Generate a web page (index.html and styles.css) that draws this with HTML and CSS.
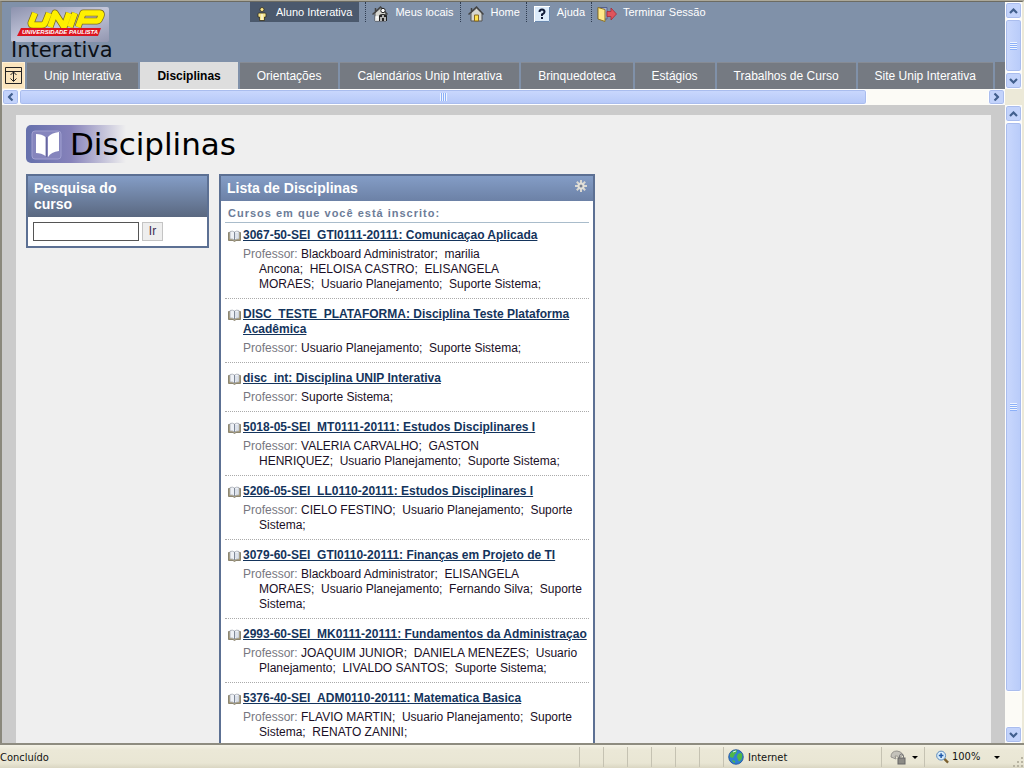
FILE: index.html
```html
<!DOCTYPE html>
<html lang="pt-BR">
<head>
<meta charset="utf-8">
<title>Unip Interativa - Disciplinas</title>
<link rel="stylesheet" href="styles.css">
</head>
<body>
<svg class="defs" aria-hidden="true">
  <defs>
    <symbol id="up" viewBox="0 0 9 6"><path d="M1 5 4.5 1.5 8 5" fill="none" stroke="#42608e" stroke-width="2.2"/></symbol>
    <symbol id="house" viewBox="0 0 16 16">
      <path d="M3 7v8h11V7L8.500 2z" fill="#d6d6d0" stroke="#555"/>
      <path d="M0.500 8.500 8.500 1l7 7.500M3.500 5V2" fill="none" stroke="#444" stroke-width="1.500"/>
    </symbol>
    <symbol id="book" viewBox="0 0 13 12">
      <path d="M0.500 2.500h12v8H8l-1.500 1L5 10.500H.500z" fill="#a89a70" stroke="#8c8672"/>
      <path d="M2 1.500Q4.500.500 6.500 2 8.500.500 11 1.500v7.500Q8.500 8.500 6.500 10 4.500 8.500 2 9z" fill="#eef1f6" stroke="#a4a9b2" stroke-width=".8"/>
      <path d="M6.500 2v8" stroke="#7e8796"/>
      <path d="M8 3v5M10 3v5" stroke="#cbd3e0"/>
    </symbol>
  </defs>
</svg>
<div class="browser">
  <div class="frame top-frame">
    <div class="banner">
      <div class="banner-top">
        <div class="brand">
          <svg class="logo" viewBox="0 0 98 36" role="img" aria-label="UNIP Universidade Paulista">
            <defs><linearGradient id="plate" x2="1" y2="1"><stop stop-color="#8d92ae"/><stop offset=".5" stop-color="#c3c6da"/><stop offset="1" stop-color="#9296b0"/></linearGradient></defs>
            <rect width="98" height="35" rx="2" fill="url(#plate)"/>
            <g fill="none" stroke-linejoin="round">
              <path d="M24 6l-4 10q0 2 2 2h9q2 0 3-2L38 6M39 20l5-14 9 14 5-14M64 6l-5 14M67 20l5-14h17q2 0 1 3l-1 2q-1 3-3 3H71" stroke="#7c6a20" stroke-width="7"/>
              <path d="M24 6l-4 10q0 2 2 2h9q2 0 3-2L38 6M39 20l5-14 9 14 5-14M64 6l-5 14M67 20l5-14h17q2 0 1 3l-1 2q-1 3-3 3H71" stroke="#fff000" stroke-width="5.500"/>
            </g>
            <path d="M10 21h80l-3 8H6z" fill="#dc1420"/>
            <text x="11" y="27" class="logo-sub">UNIVERSIDADE PAULISTA</text>
          </svg>
          <span class="brand-name">Interativa</span>
        </div>
        <nav class="tools">
          <span class="user">
            <svg class="ico" viewBox="0 0 16 16"><circle cx="8" cy="3.500" r="2" fill="#ffe98c" stroke="#332f20" stroke-width=".8"/><path d="M5 7h6q1 0 1 1v3h-1.500v3.500h-5V11H4V8q0-1 1-1z" fill="#f4e48c" stroke="#332f20" stroke-width=".8"/><path d="M8 8v6" stroke="#fff"/></svg>
            Aluno Interativa</span>
          <a href="#" class="locais"><svg class="ico" viewBox="0 0 16 16"><use href="#house"/><circle cx="11" cy="4.500" r="2.200" fill="#fff" stroke="#222"/><path d="M7 15V10q0-2 4-2t4 2v5z" fill="#222"/><path d="M9 15v-4M11 12v-3M13 15v-4M4 15v-4h2v4" stroke="#fff" stroke-width="1.300" fill="none"/></svg>Meus locais</a>
          <a href="#"><svg class="ico" viewBox="0 0 16 16"><use href="#house"/><path d="M6.500 15V9h4v6z" fill="#ffe34d" stroke="#8a6a22"/></svg>Home</a>
          <a href="#"><svg class="ico" viewBox="0 0 16 16"><rect x=".5" y=".5" width="15" height="15" fill="#dcebfa" stroke="#fff"/><path d="M1 15.500h14.500V1" fill="none" stroke="#6c8ab0"/><path d="M5.500 6q0-2.500 2.500-2.500T10.500 6q0 1.200-2.500 2.500v1.500M8 11v2" fill="none" stroke="#111c38" stroke-width="2"/></svg>Ajuda</a>
          <a href="#" class="exit"><svg class="ico wide" viewBox="0 0 20 16"><path d="M1 1.500h9V13H1z" fill="#aab4d8" stroke="#55608c"/><path d="M1 1.500l7 2V15.500L1 13z" fill="#ffe98a" stroke="#8f7426"/><path d="M10 5.500h4V2l5.500 6-5.500 6v-3.500h-4z" fill="#e0545c" stroke="#a62c3a" stroke-width=".8"/></svg>Terminar Sessão</a>
        </nav>
      </div>
      <nav class="tabs">
        <button class="toggle" aria-label="Ocultar cabeçalho"><svg viewBox="0 0 17 17"><path d="M.500.500h16v16H.500zM.500 4.500h16M8.500 5v9M5.500 8l3-3 3 3M5.500 11.500l3 3 3-3" fill="none" stroke="#222"/></svg></button>
        <a href="#">Unip Interativa</a>
        <a href="#" class="active">Disciplinas</a>
        <a href="#">Orientações</a>
        <a href="#">Calendários Unip Interativa</a>
        <a href="#">Brinquedoteca</a>
        <a href="#">Estágios</a>
        <a href="#">Trabalhos de Curso</a>
        <a href="#">Site Unip Interativa</a>
        <span class="tab-rest"></span>
      </nav>
    </div>
    <div class="vbar">
      <button aria-label="Subir"><svg><use href="#up"/></svg></button>
      <div class="thumb"><i class="grip"></i></div>
      <button aria-label="Descer"><svg class="down"><use href="#up"/></svg></button>
    </div>
    <div class="hbar">
      <button aria-label="Esquerda"><svg class="left"><use href="#up"/></svg></button>
      <div class="thumb"><i class="grip"></i></div>
      <div class="track"></div>
      <button aria-label="Direita"><svg class="right"><use href="#up"/></svg></button>
    </div>
    <div class="corner"></div>
  </div>

  <div class="frame main-frame">
    <main class="page">
      <h1 class="title">
        <svg viewBox="0 0 38 37"><rect x="6" y="5" width="29" height="28" rx="3" fill="#8585bd" stroke="#a09fd0"/><path d="M10 8q6 0 9.500 3v19q-4-3-9.500-3zM33 6q-8 1-11 5v20q3-5 11-6z" fill="#fff"/><path d="M20.500 11v20" stroke="#66669c"/></svg>
        <span>Disciplinas</span>
      </h1>
      <div class="columns">
        <section class="panel search">
          <h2><label for="q">Pesquisa do<br>curso</label></h2>
          <form class="search-form"><input id="q" type="text"><button type="button">Ir</button></form>
        </section>
        <section class="panel courses">
          <h2>Lista de Disciplinas
            <svg class="gear" viewBox="0 0 12 12"><path d="M6 0v12M0 6h12M1.800 1.800l8.400 8.400M10.200 1.800l-8.400 8.400" stroke="#d9d8d2" stroke-width="2"/><circle cx="6" cy="6" r="3.500" fill="#e2e1da"/><circle cx="6" cy="6" r="1.500" fill="#777f90"/></svg>
          </h2>
          <div class="courses-body">
            <h3>Cursos em que você está inscrito:</h3>
            <ul>
              <li><svg><use href="#book"/></svg><a href="#">3067-50-SEI_GTI0111-20111: Comunicaçao Aplicada</a>
                <p><span>Professor:</span> Blackboard Administrator;&nbsp; marilia<br>Ancona;&nbsp; HELOISA CASTRO;&nbsp; ELISANGELA<br>MORAES;&nbsp; Usuario Planejamento;&nbsp; Suporte Sistema;</p></li>
              <li><svg><use href="#book"/></svg><a href="#">DISC_TESTE_PLATAFORMA: Disciplina Teste Plataforma<br>Acadêmica</a>
                <p><span>Professor:</span> Usuario Planejamento;&nbsp; Suporte Sistema;</p></li>
              <li><svg><use href="#book"/></svg><a href="#">disc_int: Disciplina UNIP Interativa</a>
                <p><span>Professor:</span> Suporte Sistema;</p></li>
              <li><svg><use href="#book"/></svg><a href="#">5018-05-SEI_MT0111-20111: Estudos Disciplinares I</a>
                <p><span>Professor:</span> VALERIA CARVALHO;&nbsp; GASTON<br>HENRIQUEZ;&nbsp; Usuario Planejamento;&nbsp; Suporte Sistema;</p></li>
              <li><svg><use href="#book"/></svg><a href="#">5206-05-SEI_LL0110-20111: Estudos Disciplinares I</a>
                <p><span>Professor:</span> CIELO FESTINO;&nbsp; Usuario Planejamento;&nbsp; Suporte<br>Sistema;</p></li>
              <li><svg><use href="#book"/></svg><a href="#">3079-60-SEI_GTI0110-20111: Finanças em Projeto de TI</a>
                <p><span>Professor:</span> Blackboard Administrator;&nbsp; ELISANGELA<br>MORAES;&nbsp; Usuario Planejamento;&nbsp; Fernando Silva;&nbsp; Suporte<br>Sistema;</p></li>
              <li><svg><use href="#book"/></svg><a href="#">2993-60-SEI_MK0111-20111: Fundamentos da Administraçao</a>
                <p><span>Professor:</span> JOAQUIM JUNIOR;&nbsp; DANIELA MENEZES;&nbsp; Usuario<br>Planejamento;&nbsp; LIVALDO SANTOS;&nbsp; Suporte Sistema;</p></li>
              <li><svg><use href="#book"/></svg><a href="#">5376-40-SEI_ADM0110-20111: Matematica Basica</a>
                <p><span>Professor:</span> FLAVIO MARTIN;&nbsp; Usuario Planejamento;&nbsp; Suporte<br>Sistema;&nbsp; RENATO ZANINI;</p></li>
            </ul>
          </div>
        </section>
      </div>
    </main>
    <div class="vbar">
      <button aria-label="Subir"><svg><use href="#up"/></svg></button>
      <div class="thumb"><i class="grip"></i></div>
      <div class="track"></div>
      <button aria-label="Descer"><svg class="down"><use href="#up"/></svg></button>
    </div>
  </div>

  <footer class="status">
    <span class="status-text">Concluído</span>
    <i class="cell"></i><i class="cell"></i><i class="cell"></i><i class="cell"></i><i class="cell"></i><i class="cell"></i>
    <span class="zone"><svg viewBox="0 0 16 16"><circle cx="8" cy="8" r="7.300" fill="#2f7fd0" stroke="#1d4f94" stroke-width=".8"/><path d="M2 5q3-4 7-4 0 3-2 4L5 9 2 8zM10 5q3-2 4 0 1 4-2 7-2 1-2-2-2-2 0-5zM4 11l3 1v2q-3-1-3-3z" fill="#4fb848"/><path d="M5 3l3-1" stroke="#d9f2ff"/></svg>Internet</span>
    <button class="lock" aria-label="Modo protegido"><svg viewBox="0 0 16 16"><path d="M1 8q0-6 6-6 4 0 6 4L9 9Q8 6 5 7l1 3z" fill="#c4c2ba" stroke="#96948e"/><rect x="8" y="9" width="7" height="6" fill="#8c8b86" stroke="#666"/><path d="M9.500 9V7q0-2 2-2t2 2v2" fill="none" stroke="#777"/></svg><i class="caret"></i></button>
    <button class="zoom"><svg viewBox="0 0 14 14"><path d="M9 9l4 4" stroke="#7a6030" stroke-width="2.500"/><circle cx="5.500" cy="5.500" r="4.800" fill="#d8ecfa" stroke="#5484b8"/><path d="M5.500 3v5M3 5.500h5" stroke="#1e58a8" stroke-width="1.600"/></svg>100%<i class="caret"></i></button>
    <svg class="resize" viewBox="0 0 12 12"><path d="M9 1h2v2H9zM9 5h2v2H9zM9 9h2v2H9zM5 5h2v2H5zM5 9h2v2H5zM1 9h2v2H1z" fill="#b8b4a2"/></svg>
  </footer>
</div>
</body>
</html>
```

FILE: styles.css
```css
* { box-sizing: border-box; }
body { margin: 0; font-family: "Liberation Sans", Arial, sans-serif; font-size: 12px; line-height: 15px; color: #111; }
h1, h2, h3, p, ul { margin: 0; padding: 0; }
a { color: inherit; text-decoration: none; }
button { margin: 0; padding: 0; border: 0; background: none; font: inherit; color: inherit; }
svg { display: block; flex: none; }
.defs { position: absolute; width: 0; height: 0; }

.browser { display: flex; flex-direction: column; height: 100vh; overflow: hidden; background: #ece9d8; border-top: 1px solid #aca899; }
.frame { display: grid; grid-template-columns: minmax(0, 1fr) 17px; border-left: 2px solid #8a887c; border-right: 2px solid #ece9d8; }
.top-frame { border-top: 1px solid #6c6b62; }

/* Header */
.banner { background: #8091a9; overflow: hidden; }
.banner-top { display: flex; height: 60px; }
.brand { width: 248px; padding: 5px 0 0 9px; }
.logo { width: 98px; height: 36px; }
.logo-sub { font: italic bold 6px "Liberation Sans", Arial, sans-serif; fill: #fff; }
.brand-name { display: block; font: 21px/20px "DejaVu Sans", sans-serif; margin-top: -3px; color: #0c1016; }
.tools { display: flex; height: 20px; font-size: 11px; color: #fff; }
.tools > * { display: flex; gap: 7px; padding: 0 6px 0 7px; line-height: 20px; white-space: nowrap; border-right: 1px dotted #2f3c50; }
.tools .user { background: #4b596d; border: 0; gap: 6px; padding: 0 7px 0 4px; margin-right: 6px; }
.tools .locais { border-left: 1px dotted #2f3c50; padding-left: 6px; }
.tools .exit { border: 0; gap: 6px; padding-left: 5px; }
.ico { width: 16px; height: 16px; margin-top: 4px; }
.ico.wide { width: 20px; }
.tabs { display: flex; gap: 2px; height: 27px; color: #fff; white-space: nowrap; }
.tabs a { padding: 0 17px; line-height: 26px; background: #757a82; border-top: 1px solid #868b94; }
.tabs .active { background: #dedede; border-color: #dedede; color: #000; font-weight: bold; }
.tab-rest { flex: 1; background: #757a82; }
.toggle { width: 23px; padding: 4px 2px; background: #fbe5bd; border: 1px solid #fff0d4; }
.toggle svg { width: 17px; height: 17px; }

/* Scroll bars */
.vbar, .hbar { display: flex; background: #fcfbf6; }
.vbar { flex-direction: column; }
.vbar button, .hbar button { display: flex; flex: none; align-items: center; justify-content: center; width: 17px; height: 17px; }
.vbar button, .hbar button, .thumb { border: 1px solid #fff; border-radius: 3px; background: #c3d3fb; box-shadow: inset 0 0 0 1px #aabdee; }
.vbar svg, .hbar svg { width: 9px; height: 6px; }
.down { transform: rotate(180deg); }
.left { transform: rotate(-90deg); }
.right { transform: rotate(90deg); }
.thumb { display: flex; align-items: center; justify-content: center; flex: 1; }
.vbar .thumb { background: linear-gradient(90deg, #cad8fd, #b8cbf9); }
.hbar .thumb { flex: 848; background: linear-gradient(#cad8fd, #b5c8f8); }
.hbar .track { flex: 121; }
.hbar { height: 16px; }
.hbar button { height: 16px; }
.grip { width: 7px; height: 8px; background: repeating-linear-gradient(#eef4fe 0 1px, #8cb0f8 1px 2px); }
.hbar .grip { background: repeating-linear-gradient(90deg, #eef4fe 0 1px, #8cb0f8 1px 2px); }
.corner { background: #ece9d8; }
.main-frame .thumb { flex: 570; }
.main-frame .track { flex: 34; }

/* Content */
.main-frame { flex: 1; min-height: 0; grid-template-rows: minmax(0, 1fr); }
.page { overflow: hidden; padding: 10px 10px; background: #efefef; border: solid #cbcbcb; border-width: 10px 14px 0; }
.title { display: flex; align-items: center; height: 38px; margin-bottom: 11px; border-radius: 5px; background: linear-gradient(90deg, #6570ac, #8682ba 45px, #efefef 100px); }
.title svg { width: 38px; height: 37px; }
.title span { margin-left: 6px; font: 31px/38px "DejaVu Sans", sans-serif; color: #000; }
.columns { display: flex; align-items: flex-start; gap: 10px; }
.panel { border: 2px solid #5c7093; background: #fff; }
.panel h2 { padding: 4px 6px 5px; font-size: 14px; line-height: 16px; color: #fff; background: linear-gradient(#849dc6, #5a6880); }
.search { width: 183px; }
.search-form { display: flex; gap: 3px; padding: 5px; }
.search-form input { width: 106px; height: 19px; border: 1px solid #555; padding: 1px 3px; font: inherit; }
.search-form button { width: 21px; height: 19px; border: 1px solid #c4c4c4; background: #eee; color: #3c2c50; }
.courses { width: 376px; }
.courses h2 { display: flex; justify-content: space-between; background: linear-gradient(#849dc6, #6c81a6); }
.gear { width: 12px; height: 12px; }
.courses-body { padding: 5px 4px; }
.courses h3 { padding: 0 3px 1px; font-size: 11px; letter-spacing: 1px; color: #6c7c98; border-bottom: 1px solid #a9bccb; }
.courses ul { list-style: none; }
.courses li { display: grid; grid-template-columns: 12px 1fr; column-gap: 3px; padding: 8px 0 6px 3px; border-bottom: 1px dotted #aaa; white-space: nowrap; }
.courses li:first-child { padding-top: 5px; }
.courses li svg { width: 13px; height: 12px; margin-top: 2px; }
.courses li a { min-width: 0; font-weight: bold; color: #14345c; text-decoration: underline; }
.courses p { grid-column: 2; margin-top: 4px; padding-left: 16px; text-indent: -16px; color: #1a0f26; }
.courses p span { color: #77777f; }

/* Status bar */
.status { display: flex; align-items: center; height: 25px; border-top: 2px solid #8e8c80; background: linear-gradient(#f4f2e6, #ebe8d7 5px, #e9e6d4 18px, #dad6c2); font: 11px/20px "DejaVu Sans Condensed", "DejaVu Sans", sans-serif; }
.status > * { height: 20px; line-height: 20px; }
.status-text { flex: 1; padding-top: 1px; }
.cell { width: 24px; border-left: 1px solid #c5c2b2; }
.zone { display: flex; gap: 4px; width: 158px; padding: 1px 0 0 4px; border-left: 1px solid #c5c2b2; }
.zone svg { width: 16px; height: 16px; margin-top: 1px; }
.status button { display: flex; align-items: center; border-left: 1px solid #c5c2b2; padding-top: 1px; }
.status .lock { width: 43px; gap: 6px; padding-left: 8px; }
.lock svg { width: 16px; height: 16px; }
.status .zoom { width: 88px; gap: 3px; padding-left: 11px; padding-right: 12px; }
.zoom svg { width: 13px; height: 14px; }
.caret { border: 3px solid transparent; border-top-color: #000; border-bottom: 0; }
.zoom .caret { margin-left: auto; }
.status .resize { width: 12px; height: 12px; align-self: flex-end; }
```
